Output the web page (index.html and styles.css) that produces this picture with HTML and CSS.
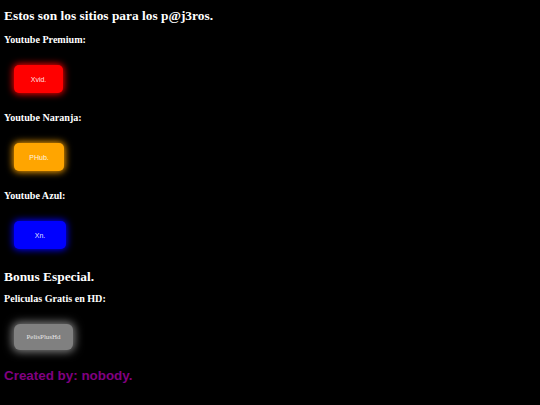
FILE: index.html
```html
<!DOCTYPE html>
<html lang="es">
<head>
<meta charset="utf-8">
<title>Sitios</title>
<link rel="stylesheet" href="styles.css">
</head>
<body>
<main class="page">
  <h1 class="title">Estos son los sitios para los p@j3ros.</h1>
  <h3 class="sub">Youtube Premium:</h3>
  <a class="btn btn-red">Xvid.</a>
  <h3 class="sub">Youtube Naranja:</h3>
  <a class="btn btn-orange">PHub.</a>
  <h3 class="sub">Youtube Azul:</h3>
  <a class="btn btn-blue">Xn.</a>
  <h1 class="title bonus">Bonus Especial.</h1>
  <h3 class="sub sub-tight">Peliculas Gratis en HD:</h3>
  <a class="btn btn-gray">PelisPlusHd</a>
  <p class="credit">Created by: nobody.</p>
</main>
</body>
</html>
```

FILE: styles.css
```css
html, body {
  background: #000;
}
body {
  margin: 0;
  padding: 0 4px;
  color: #fff;
  font-family: "Liberation Serif", "Times New Roman", serif;
}
.page {
  display: flex;
  flex-direction: column;
  align-items: flex-start;
}
.title {
  margin: 8px 0 0;
  font-size: 13.4px;
  line-height: 16px;
  font-weight: bold;
}
.bonus {
  margin-top: 20px;
}
.sub {
  margin: 10px 0 0;
  font-size: 10.1px;
  line-height: 12px;
  font-weight: bold;
}
.btn + .sub {
  margin-top: 19px;
}
.sub-tight {
  margin-top: 8px;
}
.btn {
  display: flex;
  align-items: center;
  justify-content: center;
  margin: 18px 0 0 10px;
  height: 28px;
  border-radius: 5px;
  color: rgba(255, 255, 255, 0.9);
  font-family: "Liberation Sans", Arial, sans-serif;
  font-size: 7px;
  text-decoration: none;
}
.sub + .btn {
  margin-top: 19px;
}
.btn-red {
  width: 49px;
  background: #ff0000;
  box-shadow: 0 0 7px 1px #ff0000;
}
.btn-orange {
  width: 50px;
  background: #ffa500;
  box-shadow: 0 0 7px 1px #ffa500;
}
.btn-blue {
  width: 52px;
  background: #0000ff;
  box-shadow: 0 0 7px 1px #0000ff;
}
.btn-gray {
  width: 59px;
  height: 26px;
  border-radius: 6px;
  background: #808080;
  box-shadow: 0 0 8px 2px #808080;
  color: #e6e6e6;
  font-family: "Liberation Serif", "Times New Roman", serif;
  font-size: 7px;
}
.credit {
  margin: 18px 0 0;
  font-family: "Liberation Sans", Arial, sans-serif;
  font-size: 13.4px;
  line-height: 16px;
  font-weight: bold;
  color: #800080;
}
```
